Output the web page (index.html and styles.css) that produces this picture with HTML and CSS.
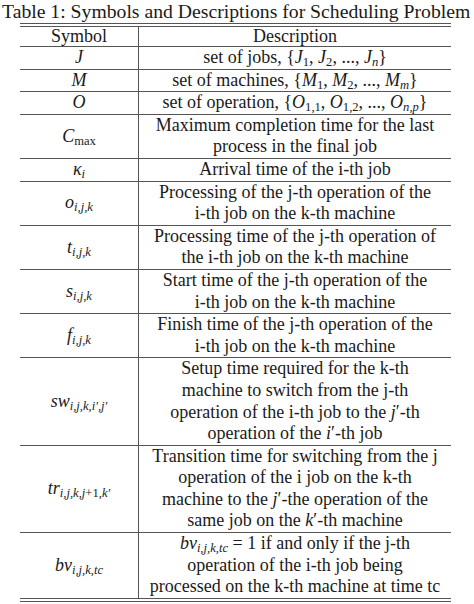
FILE: index.html
```html
<!DOCTYPE html>
<html>
<head>
<meta charset="utf-8">
<link rel="stylesheet" href="styles.css">
</head>
<body>
<div class="caption">Table 1: Symbols and Descriptions for Scheduling Problem</div>
<div class="frame">
<table class="symtab">
<thead>
<tr><th class="sym">Symbol</th><th class="desc">Description</th></tr>
</thead>
<tbody>
<tr><td class="sym"><i>J</i></td><td class="desc">set of jobs, {<i>J</i><sub>1</sub>, <i>J</i><sub>2</sub>, ..., <i>J<sub>n</sub></i>}</td></tr>
<tr><td class="sym"><i>M</i></td><td class="desc">set of machines, {<i>M</i><sub>1</sub>, <i>M</i><sub>2</sub>, ..., <i>M<sub>m</sub></i>}</td></tr>
<tr><td class="sym"><i>O</i></td><td class="desc">set of operation, {<i>O</i><sub>1,1</sub>, <i>O</i><sub>1,2</sub>, ..., <i>O<sub>n,p</sub></i>}</td></tr>
<tr><td class="sym"><i>C</i><sub>max</sub></td><td class="desc">Maximum completion time for the last<br>process in the final job</td></tr>
<tr><td class="sym"><i>κ<sub>i</sub></i></td><td class="desc">Arrival time of the i-th job</td></tr>
<tr><td class="sym"><i>o<sub>i,j,k</sub></i></td><td class="desc">Processing of the j-th operation of the<br>i-th job on the k-th machine</td></tr>
<tr><td class="sym"><i>t<sub>i,j,k</sub></i></td><td class="desc">Processing time of the j-th operation of<br>the i-th job on the k-th machine</td></tr>
<tr><td class="sym"><i>s<sub>i,j,k</sub></i></td><td class="desc">Start time of the j-th operation of the<br>i-th job on the k-th machine</td></tr>
<tr><td class="sym"><i>f<sub>i,j,k</sub></i></td><td class="desc">Finish time of the j-th operation of the<br>i-th job on the k-th machine</td></tr>
<tr><td class="sym"><i>sw<sub>i,j,k,i′,j′</sub></i></td><td class="desc">Setup time required for the k-th<br>machine to switch from the j-th<br>operation of the i-th job to the <i>j</i>′-th<br>operation of the <i>i</i>′-th job</td></tr>
<tr><td class="sym"><i>tr<sub>i,j,k,j<span class="up">+1</span>,k′</sub></i></td><td class="desc">Transition time for switching from the j<br>operation of the i job on the k-th<br>machine to the <i>j</i>′-the operation of the<br>same job on the <i>k</i>′-th machine</td></tr>
<tr><td class="sym"><i>bv<sub>i,j,k,tc</sub></i></td><td class="desc"><i>bv<sub>i,j,k,tc</sub></i> = 1 if and only if the j-th<br>operation of the i-th job being<br>processed on the k-th machine at time tc</td></tr>
</tbody>
</table>
</div>
</body>
</html>
```
FILE: styles.css
```css
html, body {
  margin: 0;
  padding: 0;
  background: #ffffff;
}
body {
  font-family: "Liberation Serif", "Times New Roman", serif;
  color: #1a1a1a;
  width: 474px;
  height: 604px;
  overflow: hidden;
}
.caption {
  font-size: 19.7px;
  line-height: 22px;
  height: 23px;
  white-space: nowrap;
  padding-left: 2px;
}
.frame {
  margin-left: 20px;
  width: 431px;
  border-top: 1px solid #555;
  padding-top: 2px;
  border-bottom: 1px solid #555;
  padding-bottom: 2px;
}
.symtab {
  width: 100%;
  border-collapse: collapse;
  border-top: 1px solid #555;
  font-size: 18px;
}
.symtab th,
.symtab td {
  padding: 0;
  text-align: center;
  vertical-align: middle;
  font-weight: normal;
  border-bottom: 1px solid #555;
}
.symtab th {
  line-height: 19px;
}
.symtab td {
  line-height: 21.6px;
}
.symtab .sym {
  width: 118px;
  border-right: 1px solid #555;
}
.symtab i {
  font-style: italic;
}
sub {
  font-size: 70%;
  vertical-align: -0.25em;
  line-height: 0;
}
.up {
  font-style: normal;
}
```
